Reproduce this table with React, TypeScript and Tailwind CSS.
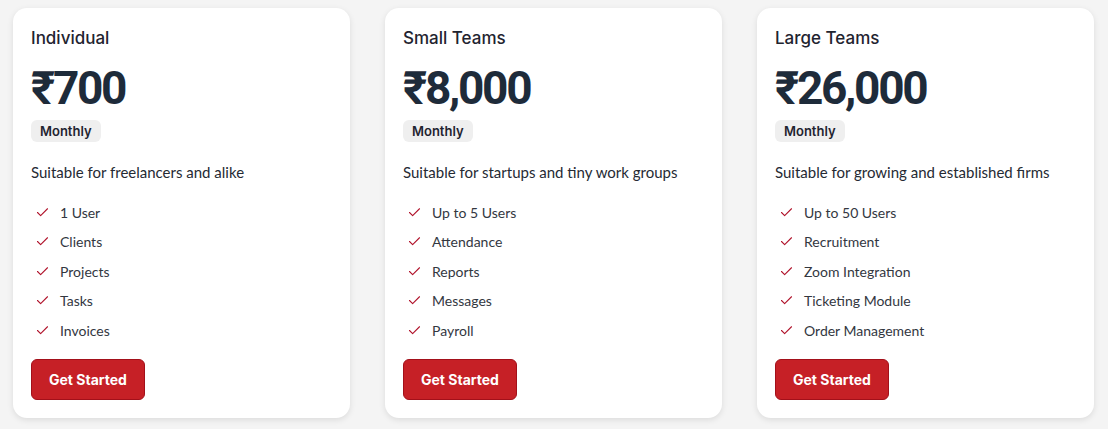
import { Check } from "lucide-react"

const plans = [
  {
    name: "Individual",
    price: "₹700",
    desc: "Suitable for freelancers and alike",
    features: ["1 User", "Clients", "Projects", "Tasks", "Invoices"],
  },
  {
    name: "Small Teams",
    price: "₹8,000",
    desc: "Suitable for startups and tiny work groups",
    features: ["Up to 5 Users", "Attendance", "Reports", "Messages", "Payroll"],
  },
  {
    name: "Large Teams",
    price: "₹26,000",
    desc: "Suitable for growing and established firms",
    features: ["Up to 50 Users", "Recruitment", "Zoom Integration", "Ticketing Module", "Order Management"],
  },
]

export default function App() {
  return (
    <main className="w-[1108px] h-[429px] bg-[#f4f4f4] px-[13px] pt-[8px] overflow-hidden">
      <div className="flex gap-[35px]">
        {plans.map((p) => (
          <div
            key={p.name}
            className="w-[337px] h-[410px] bg-white rounded-[14px] shadow-[0_2px_6px_rgba(0,0,0,0.10)] px-[18px] pt-[18px]"
          >
            <h2 className="text-[17px] leading-[24px] font-medium text-[#1f2430] font-['Inter','Noto_Sans',sans-serif]">
              {p.name}
            </h2>
            <div className="mt-[10px] text-[46px] leading-[56px] font-bold tracking-[-2.3px] text-[#1e2b3a] font-['Roboto','Noto_Sans',sans-serif]">
              {p.price}
            </div>
            <span className="inline-block mt-[4px] bg-[#efefef] rounded-[6px] px-[9px] h-[22px] leading-[22px] text-[13px] font-semibold text-[#1f2430] font-['Inter','Noto_Sans',sans-serif]">
              Monthly
            </span>
            <p className="mt-[19px] text-[15px] leading-[22px] text-[#252a33] font-['Lato','Noto_Sans',sans-serif]">
              {p.desc}
            </p>
            <ul className="mt-[19px] flex flex-col gap-[9.5px]">
              {p.features.map((f) => (
                <li key={f} className="flex items-center h-[20px] text-[14px] text-[#33373f] font-['Lato','Noto_Sans',sans-serif]">
                  <Check className="w-[15px] h-[15px] text-[#b0122a] ml-[4px] mr-[10px]" strokeWidth={1.7} />
                  {f}
                </li>
              ))}
            </ul>
            <button className="mt-[19px] h-[41px] px-[17px] bg-[#c62026] border border-[#a3101a] rounded-[6px] text-white text-[14px] font-bold font-['Inter','Noto_Sans',sans-serif]">
              Get Started
            </button>
          </div>
        ))}
      </div>
    </main>
  )
}
